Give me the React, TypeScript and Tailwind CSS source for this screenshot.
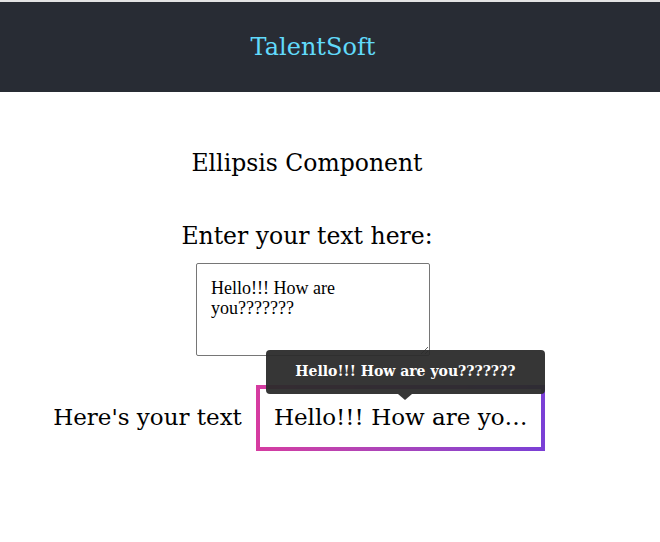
import React, { useState } from 'react';

export default function App() {
  const [text, setText] = useState('Hello!!! How are you???????');

  return (
    <div className="min-h-[542px] bg-white" style={{ fontFamily: '"DejaVu Serif", Georgia, serif' }}>
      <header className="border-t-2 border-[#e4e4e4] bg-[#282c34] h-[92px] flex items-center justify-center pr-[34px]">
        <h1 className="text-[#61dafb] text-[24px]">TalentSoft</h1>
      </header>

      <main className="flex flex-col items-center pr-[46px]">
        <h2 className="mt-[54px] text-[23.5px] text-black">Ellipsis Component</h2>
        <label className="mt-[38px] text-[23.5px] text-black">Enter your text here:</label>
        <textarea
          value={text}
          onChange={(e) => setText(e.target.value)}
          className="mt-[8px] ml-[12px] w-[234px] h-[93px] border border-[#767676] rounded-[2px] px-[14px] py-[14px] text-[18px] leading-[20px] text-black"
          style={{ fontFamily: '"Liberation Serif", "Times New Roman", serif' }}
        />

        {/* output row */}
        <div className="mt-[29px] flex items-center ml-[-16px]">
          <span className="text-[23px] text-black mr-[14px]">Here's your text</span>
          <div className="relative">
            {/* tooltip */}
            <div className="absolute left-[10px] top-[-35px] w-[279px] h-[44px] rounded-[4px] bg-[#2b2b2b]/95 text-white font-bold text-[14px] flex items-center justify-center z-10">
              {text}
              <span className="absolute left-1/2 -translate-x-1/2 bottom-[-6px] w-0 h-0 border-l-[7px] border-r-[7px] border-t-[6px] border-l-transparent border-r-transparent border-t-[#2b2b2b]/95" />
            </div>
            <div className="p-[4px] bg-gradient-to-r from-[#d63ba0] to-[#7a3fd6]">
              <div className="bg-white w-[281px] h-[58px] pl-[14px] pr-[12px] flex items-center text-[23px] text-black">
                <span className="block overflow-hidden text-ellipsis whitespace-nowrap">{text}</span>
              </div>
            </div>
          </div>
        </div>
      </main>
    </div>
  );
}
